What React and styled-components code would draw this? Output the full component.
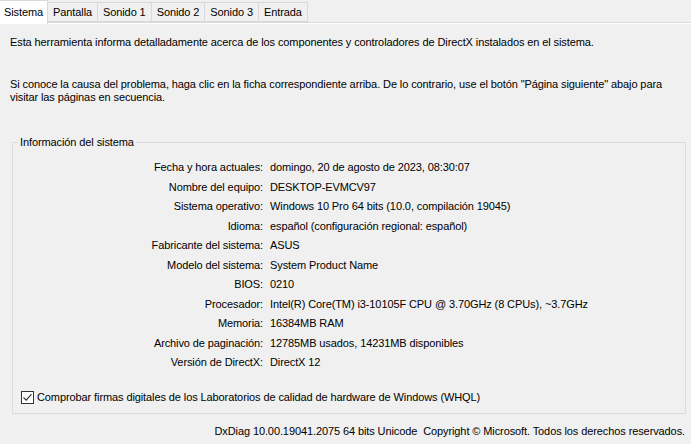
import React from 'react'
import styled, { createGlobalStyle } from 'styled-components';

const GlobalStyle = createGlobalStyle`
    html, body {
        margin: 0;
        padding: 0;
        background: #f0f0f0;
    }
    body {
        font-family: "Liberation Sans", Arial, sans-serif;
        font-size: 11px;
        letter-spacing: -0.1px;
        color: #000;
    }
`;

const tabs = ['Sistema', 'Pantalla', 'Sonido 1', 'Sonido 2', 'Sonido 3', 'Entrada'];

const rows = [
    ['Fecha y hora actuales:', 'domingo, 20 de agosto de 2023, 08:30:07'],
    ['Nombre del equipo:', 'DESKTOP-EVMCV97'],
    ['Sistema operativo:', 'Windows 10 Pro 64 bits (10.0, compilación 19045)'],
    ['Idioma:', 'español (configuración regional: español)'],
    ['Fabricante del sistema:', 'ASUS'],
    ['Modelo del sistema:', 'System Product Name'],
    ['BIOS:', '0210'],
    ['Procesador:', 'Intel(R) Core(TM) i3-10105F CPU @ 3.70GHz (8 CPUs), ~3.7GHz'],
    ['Memoria:', '16384MB RAM'],
    ['Archivo de paginación:', '12785MB usados, 14231MB disponibles'],
    ['Versión de DirectX:', 'DirectX 12'],
];

function App() {
    return (
        <>
        <GlobalStyle />
        <WindowStyled>
            <TabStrip>
                {tabs.map((t, i) => (
                    <Tab key={t} $active={i === 0}>{t}</Tab>
                ))}
            </TabStrip>
            <Panel>
                <Intro>
                    Esta herramienta informa detalladamente acerca de los componentes y controladores de DirectX instalados en el sistema.
                </Intro>
                <Intro $spaced>
                    Si conoce la causa del problema, haga clic en la ficha correspondiente arriba. De lo contrario, use el botón "Página siguiente" abajo para visitar las páginas en secuencia.
                </Intro>
                <GroupBox>
                    <legend>Información del sistema</legend>
                    <InfoGrid>
                        {rows.map(([label, value]) => (
                            <React.Fragment key={label}>
                                <Label>{label}</Label>
                                <Value>{value}</Value>
                            </React.Fragment>
                        ))}
                    </InfoGrid>
                    <CheckRow>
                        <CheckBox>
                            <svg width="11" height="11" viewBox="0 0 11 11">
                                <path d="M1.5 5.5 L4.2 8.2 L9.5 2.2" fill="none" stroke="#333" strokeWidth="1.1" />
                            </svg>
                        </CheckBox>
                        Comprobar firmas digitales de los Laboratorios de calidad de hardware de Windows (WHQL)
                    </CheckRow>
                </GroupBox>
                <Footer>
                    DxDiag 10.00.19041.2075 64 bits Unicode&nbsp; Copyright © Microsoft. Todos los derechos reservados.
                </Footer>
            </Panel>
        </WindowStyled>
        </>
    )
}

const WindowStyled = styled.div`
    width: 691px;
    height: 444px;
    overflow: hidden;
    background: #f0f0f0;
    line-height: 13px;
`;

const TabStrip = styled.div`
    display: flex;
    align-items: flex-end;
    height: 22px;
    position: relative;
    z-index: 1;
`;

const Tab = styled.div`
    box-sizing: border-box;
    height: ${p => p.$active ? '24px' : '20px'};
    margin-bottom: ${p => p.$active ? '-2px' : '0'};
    padding: ${p => p.$active ? '5px 4px 0 4px' : '3px 5px 0 5px'};
    background: ${p => p.$active ? '#fff' : '#f0f0f0'};
    border: 1px solid #d9d9d9;
    border-bottom: ${p => p.$active ? 'none' : '1px solid #d9d9d9'};
    border-left: ${p => p.$active ? 'none' : '1px solid #d9d9d9'};
    margin-left: ${p => p.$active ? '0' : '-1px'};
    white-space: nowrap;
    &:first-child{
        margin-left: 0;
    }
`;

const Panel = styled.div`
    border-top: 1px solid #d9d9d9;
    box-shadow: inset 0 1px 0 #fff;
    padding-top: 13px;
`;

const Intro = styled.p`
    margin: ${p => p.$spaced ? '29px' : '0'} 0 0 10px;
    width: 676px;
`;

const GroupBox = styled.fieldset`
    margin: 32px 5px 0 12px;
    padding: 9px 0 9px 0;
    border: 1px solid #dcdcdc;
    min-width: 0;
    legend{
        margin-left: 5px;
        padding: 0 2px 0 2px;
    }
`;

const InfoGrid = styled.div`
    display: grid;
    grid-template-columns: 250px 1fr;
    column-gap: 7px;
    grid-auto-rows: 19.5px;
    align-items: center;
`;

const Label = styled.div`
    text-align: right;
`;

const Value = styled.div`
    white-space: nowrap;
`;

const CheckRow = styled.div`
    display: flex;
    align-items: center;
    gap: 3px;
    margin: 18px 0 0 8px;
    height: 13px;
`;

const CheckBox = styled.span`
    box-sizing: border-box;
    width: 13px;
    height: 13px;
    border: 1px solid #333;
    background: #fff;
    display: flex;
    align-items: center;
    justify-content: center;
`;

const Footer = styled.div`
    margin-top: 11px;
    padding-right: 6px;
    text-align: right;
    white-space: nowrap;
`;

export default App;
